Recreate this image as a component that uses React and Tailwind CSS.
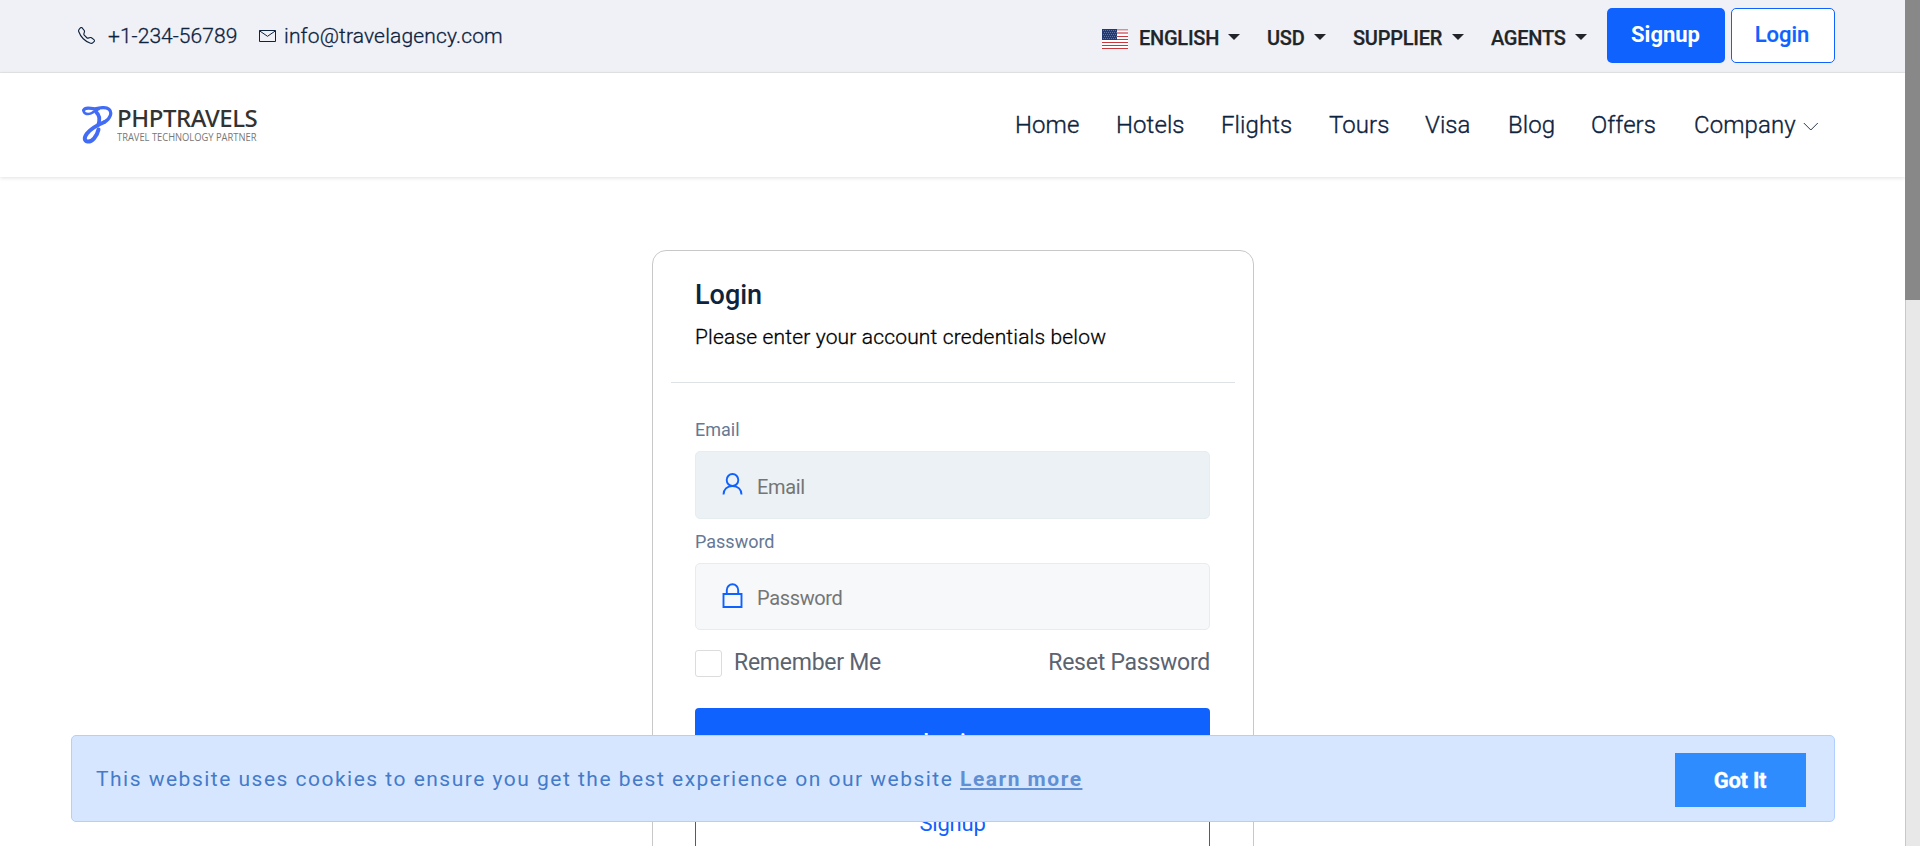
import React from "react";

const nav = [
  ["Home", "w-[64px] mr-[37px]"],
  ["Hotels", "w-[68px] mr-[37px]"],
  ["Flights", "w-[71px] mr-[37px]"],
  ["Tours", "w-[59px] mr-[37px]"],
  ["Visa", "w-[46px] mr-[37px]"],
  ["Blog", "w-[46px] mr-[37px]"],
  ["Offers", "w-[66px] mr-[37px]"],
  ["Company", "w-[101px]"],
];

const Caret = ({ className }) => (
  <svg className={className} width="12" height="6" viewBox="0 0 12 6"><path d="M0 0h12L6 6z" fill="#212529" /></svg>
);

const dots = [];
for (let r = 0; r < 5; r++) for (let c = 0; c < 7; c++) dots.push([1 + c * 2 + (r % 2 ? 1 : 0), 1 + r * 2]);

function Flag() {
  return (
    <svg width="26" height="20" viewBox="0 0 26 20" shapeRendering="crispEdges">
      <rect width="26" height="20" fill="#fff" />
      {[0, 3, 4].map((y) => <rect key={y} y={y} width="26" height="1" fill="#de8c93" />)}
      {[1, 7, 10, 13, 16, 19].map((y) => <rect key={y} y={y} width="26" height="1" fill={y === 1 ? "#efc4c8" : "#c8383f"} />)}
      <rect width="15" height="11" fill="#233a70" />
      {dots.map(([x, y]) => <rect key={x + "-" + y} x={x} y={y} width="1" height="1" fill="#6073a0" />)}
    </svg>
  );
}

function Logo() {
  return (
    <svg width="31" height="38" viewBox="0 0 31 38" fill="none" stroke="#426cf5" strokeLinecap="round" strokeLinejoin="round">
      <path d="M1.700 4.200C3 1.200 8 2 13 2.800 18 1.500 24 .8 27 3.200c3.500 3 1.500 9.500-4.500 12.800" strokeWidth="3.200" />
      <path d="M1.700 4.200c-.5 4 5 5 9 2.300 2-1.300 4-2.800 6-3.500" strokeWidth="2.600" />
      <path d="M14.500 6.500c3 2.500 3.200 7.500 2 12" strokeWidth="3.800" />
      <path d="M22.500 16c-6 2.500-13 6-17.500 11.500-3.500 4.500-2.500 7.500.5 8 4.500.5 9.500-5 11-12" strokeWidth="4" />
    </svg>
  );
}

function TopBar() {
  return (
    <div className="flex h-[73px] items-start border-b border-[#e4e6e8] bg-[#f0f1f6] pl-[78px] text-[#0d233e]">
      <svg className="mt-[27px]" width="17" height="17" viewBox="0 0 16 16" fill="#0d233e"><path d="M3.654 1.328a.678.678 0 0 0-1.015-.063L1.605 2.300c-.483.484-.661 1.169-.45 1.770a17.600 17.600 0 0 0 4.168 6.608 17.600 17.600 0 0 0 6.608 4.168c.601.211 1.286.033 1.770-.45l1.034-1.034a.678.678 0 0 0-.063-1.015l-2.307-1.794a.680.680 0 0 0-.580-.122l-2.190.547a1.750 1.750 0 0 1-1.657-.459L5.482 8.062a1.750 1.750 0 0 1-.460-1.657l.548-2.190a.680.680 0 0 0-.122-.580zM1.884.511a1.745 1.745 0 0 1 2.612.163L6.290 2.980c.329.423.445.974.315 1.494l-.547 2.190a.680.680 0 0 0 .178.643l2.457 2.457a.680.680 0 0 0 .644.178l2.189-.547a1.750 1.750 0 0 1 1.494.315l2.306 1.794c.829.645.905 1.870.163 2.611l-1.034 1.034c-.740.740-1.846 1.065-2.877.702a18.600 18.600 0 0 1-7.010-4.420 18.600 18.600 0 0 1-4.420-7.009c-.362-1.030-.037-2.137.703-2.877z" /></svg>
      <span className="ml-[13px] mt-[21px] w-[129px] whitespace-nowrap text-[21px] font-light leading-[30px] tracking-[0.05px] [-webkit-text-stroke:0.3px]">+1-234-56789</span>
      <svg className="ml-[22px] mt-[30px]" width="17" height="12" viewBox="0 0 17 12" fill="none" stroke="#0d233e"><path d="M.5.500h16v11H.5zM.5.800l8 5.500 8-5.500" /></svg>
      <span className="ml-[8px] mt-[21px] w-[219px] whitespace-nowrap text-[21px] font-light leading-[30px] tracking-[0.16px] [-webkit-text-stroke:0.3px]">info@travelagency.com</span>
      <div className="ml-[599px] flex items-start whitespace-nowrap text-[20px] font-medium leading-[28px] tracking-[-0.25px] text-[#212529] [-webkit-text-stroke:0.25px]">
        <div className="mt-[29px]"><Flag /></div>
        <span className="ml-[11px] mt-[24px] w-[79px]">ENGLISH</span><Caret className="ml-[10px] mt-[34px]" />
        <span className="ml-[27px] mt-[24px] w-[37px]">USD</span><Caret className="ml-[10px] mt-[34px]" />
        <span className="ml-[27px] mt-[24px] w-[89px]">SUPPLIER</span><Caret className="ml-[10px] mt-[34px]" />
        <span className="ml-[27px] mt-[24px] w-[75px]">AGENTS</span><Caret className="ml-[9px] mt-[34px]" />
      </div>
      <button className="ml-[20px] mt-[8px] h-[55px] w-[118px] rounded-[5px] bg-[#0f62fe] pb-[3px] pr-[1px] text-[22px] font-bold text-white">Signup</button>
      <button className="ml-[6px] mt-[8px] h-[55px] w-[104px] rounded-[5px] border border-[#0f62fe] bg-white pb-[3px] pr-[2px] text-[22px] font-medium text-[#0f62fe] [-webkit-text-stroke:0.2px]">Login</button>
    </div>
  );
}

function Header() {
  return (
    <header className="flex h-[104px] items-start bg-white pl-[82px] shadow-[0_1px_4px_rgba(0,0,0,0.12)]">
      <div className="mt-[33px]"><Logo /></div>
      <div className="ml-[4px] mt-[33px] flex w-[140px] flex-col whitespace-nowrap">
        <span className="font-['Noto_Sans'] text-[24px] font-medium leading-[24px] tracking-[-0.45px] text-[#333]">PHPTRAVELS</span>
        <span className="mt-[1px] origin-left scale-x-[0.85] font-['Open_Sans'] text-[11px] leading-[12px] text-[#777]">TRAVEL TECHNOLOGY PARTNER</span>
      </div>
      <nav className="ml-[758px] mt-[36px] flex whitespace-nowrap text-[24px] font-light leading-[32px] tracking-[0.08px] text-[#0d233e] [-webkit-text-stroke:0.35px]">
        {nav.map(([t, c]) => <a key={t} className={c}>{t}</a>)}
      </nav>
      <svg className="ml-[8px] mt-[49px]" width="16" height="10" viewBox="0 0 16 10" fill="none" stroke="#0d233e" strokeWidth="0.9"><path d="M.8 1l7 7 7-7" /></svg>
    </header>
  );
}

function LoginCard() {
  return (
    <section className="ml-[652px] mt-[73px] h-[640px] w-[602px] rounded-t-[14px] border border-[#c8c8c8] bg-white px-[18px]">
      <div className="h-[132px] border-b border-[#dee2e6] pl-[24px] pt-[26px]">
        <h1 className="text-[27px] font-medium leading-[36px] text-[#0d233e]">Login</h1>
        <p className="mt-[9px] whitespace-nowrap text-[21px] font-light leading-[30px] tracking-[0.16px] text-black [-webkit-text-stroke:0.3px]">Please enter your account credentials below</p>
      </div>
      <div className="flex w-[539px] flex-col pl-[24px] pt-[33px] text-[18px]">
        <label className="h-[35px] leading-[28px] text-[#667894]">Email</label>
        <div className="flex h-[68px] items-start rounded-[5px] border border-[#e6edf0] bg-[#ebf1f4] pl-[26px]">
          <svg className="mt-[20px]" width="22" height="24" viewBox="0 0 22 24" fill="none" stroke="#0f62fe" strokeWidth="1.900"><ellipse cx="10.500" cy="8" rx="5.800" ry="6" /><path d="M1.500 22.500c0-5 3.500-8.500 9-8.500s9 3.500 9 8.500" /></svg>
          <span className="ml-[13px] mt-[21px] text-[20px] leading-[28px] tracking-[-0.35px] text-[#757575]">Email</span>
        </div>
        <label className="h-[44px] pt-[9px] leading-[28px] text-[#667894]">Password</label>
        <div className="flex h-[67px] items-start rounded-[5px] border border-[#e6edf0] bg-[#f6f8fa] pl-[26px]">
          <svg className="mt-[18px]" width="22" height="27" viewBox="0 0 22 27" fill="none" stroke="#0f62fe" strokeWidth="1.900"><path d="M1.500 12h18v13h-18zM4.800 12V8a5.700 5.700 0 0 1 11.400 0v4" /></svg>
          <span className="ml-[13px] mt-[20px] text-[20px] leading-[28px] tracking-[-0.35px] text-[#757575]">Password</span>
        </div>
        <div className="mt-[20px] flex h-[58px] items-start justify-between text-[23px] leading-[28px] tracking-[-0.25px] text-[#5c6370]">
          <div className="flex"><i className="mr-[12px] h-[27px] w-[27px] rounded-[3px] border border-[#dcdcdc]" /><span className="-mt-[1px]">Remember Me</span></div>
          <span className="-mt-[1px]">Reset Password</span>
        </div>
        <button className="h-[60px] rounded-[4px] bg-[#0f62fe] pr-[4px] pt-[7px] text-[22px] font-medium text-white">Login</button>
        <button className="mt-[27px] h-[60px] rounded-[4px] border border-[#0f62fe] pb-[3px] text-[22px] tracking-[-0.2px] text-[#0f62fe]">Signup</button>
      </div>
    </section>
  );
}

export default function App() {
  return (
    <div className="relative flex h-[846px] w-[1920px] overflow-hidden bg-white font-[Roboto]">
      <main className="h-[846px] w-[1905px] shrink-0 overflow-hidden">
        <TopBar />
        <Header />
        <LoginCard />
      </main>
      <div className="h-full w-[15px] border-l border-[#c8c8c8] bg-[#e8e8e8]"><div className="-ml-px h-[300px] w-[15px] bg-[#888]" /></div>
      <div className="absolute left-[71px] top-[735px] flex h-[87px] w-[1764px] items-start rounded-[5px] border border-[#b1d0ff] bg-[#d7e6ff] pl-[24px]">
        <p className="mt-[28px] whitespace-nowrap text-[21px] leading-[30px] tracking-[1.49px] text-[#447bc9]">This website uses cookies to ensure you get the best experience on our website <a className="font-bold text-[#6090d3] underline decoration-2 underline-offset-[2px] [text-decoration-skip-ink:none]">Learn more</a></p>
        <button className="ml-auto mr-[28px] mt-[17px] h-[54px] w-[131px] bg-[#2f8cff] pr-[1px] pt-[1px] text-[22px] font-bold tracking-[-0.3px] text-white [-webkit-text-stroke:0.3px]">Got It</button>
      </div>
    </div>
  );
}
